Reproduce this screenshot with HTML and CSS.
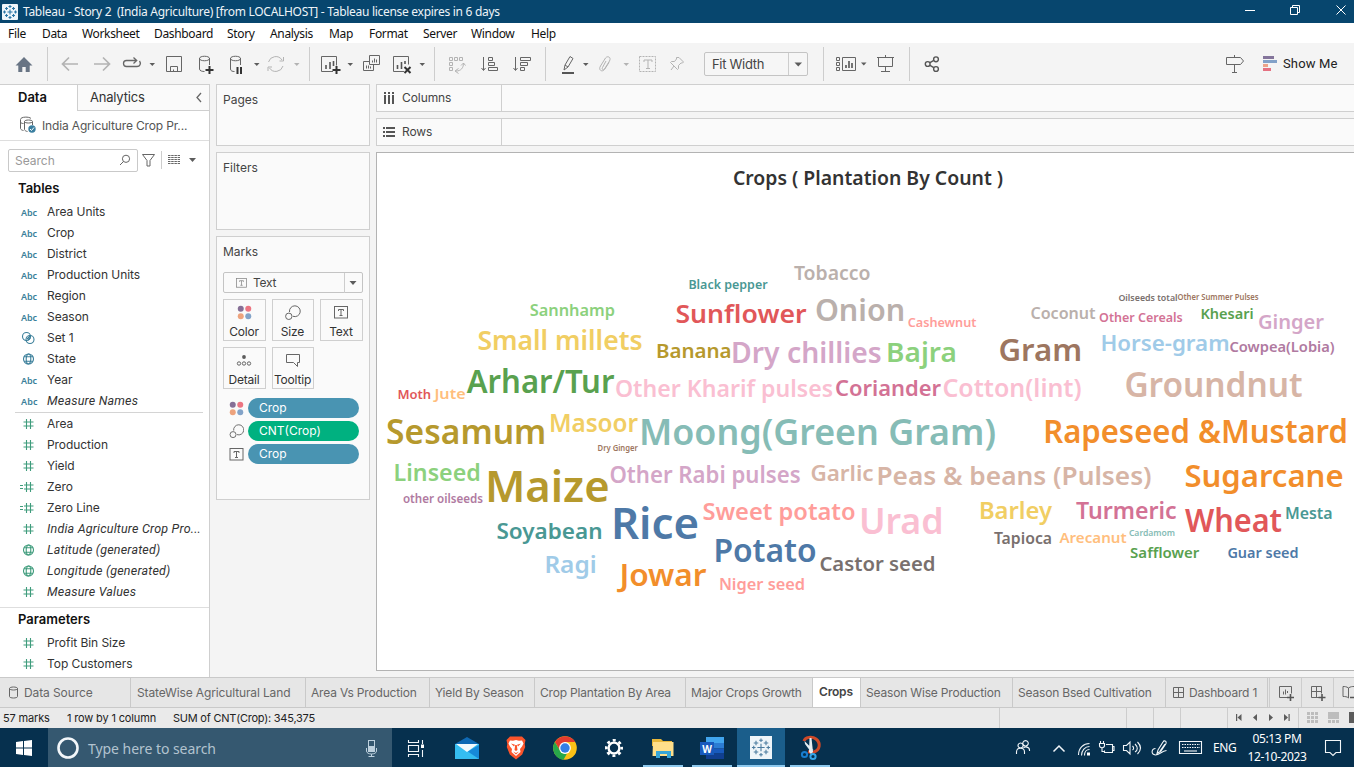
FILE: index.html
```html
<!DOCTYPE html>
<html lang="en">
<head>
<meta charset="utf-8">
<title>Tableau - Story 2 (India Agriculture)</title>
<link rel="stylesheet" href="styles.css">
</head>
<body>
<svg class="defs" width="0" height="0">
  <defs>
    <symbol id="hash" viewBox="0 0 16 14"><path d="M6.500 2v10M10.500 2v10M3.500 5h10M3.500 9h10"/></symbol>
    <symbol id="eqhash" viewBox="0 0 16 14"><path d="M6.500 2v10M10.500 2v10M4 5h9.500M4 9h9.500M0 5.500h3M0 8.500h3"/></symbol>
    <symbol id="globe" viewBox="0 0 16 14"><circle cx="8.500" cy="7" r="5"/><ellipse cx="8.500" cy="7" rx="2.300" ry="5"/><path d="M4.200 4.800h8.600M4.200 9.200h8.600"/></symbol>
    <symbol id="set" viewBox="0 0 16 14"><circle cx="6.500" cy="5.500" r="4"/><circle cx="10" cy="8.500" r="4"/><path d="M7 8l3-3M8 9l2.500-2.500"/></symbol>
    <symbol id="dots" viewBox="0 0 16 16"><circle cx="4" cy="4" r="3.200" fill="#866f96"/><circle cx="12" cy="4" r="3.200" fill="#ec7582"/><circle cx="4" cy="12" r="3.200" fill="#eda37d"/><circle cx="12" cy="12" r="3.200" fill="#83a3c8"/></symbol>
    <symbol id="size" viewBox="0 0 16 16"><path d="M5 7a5.400 5.400 0 1 1 3.500 4.300"/><circle cx="4.300" cy="11.300" r="3.200"/></symbol>
    <symbol id="tbox" viewBox="0 0 14 13"><rect x=".5" y=".5" width="13" height="11.500"/><path d="M4.500 5V3.500h5V5M7 3.500v6M5.500 9.500h3"/></symbol>
    <symbol id="tableau" viewBox="0 0 22 22"><path d="M11 7v8M7 11h8M11 1v4M9 3h4M11 17v4M9 19h4M1 11h4M3 9v4M17 11h4M19 9v4M5.500 3.500v5M3 6h5M16.500 3.500v5M14 6h5M5.500 13.500v5M3 16h5M16.500 13.500v5M14 16h5" stroke="#4b7c9f" stroke-width="1.200"/></symbol>
  </defs>
</svg>

<header class="titlebar">
  <svg class="applogo" width="16" height="16" viewBox="0 0 16 16"><rect width="16" height="16" rx="1" fill="#edf5fa"/><g fill="none" stroke="#2976a5" stroke-width="1.100"><path d="M8 5.500v5M5.500 8h5M8 1v3M6.500 2.500h3M8 12v3M6.500 13.500h3M1 8h3M2.500 6.500v3M12 8h3M13.500 6.500v3M4.500 3v3M3 4.500h3M11.500 3v3M10 4.500h3M4.500 10v3M3 11.500h3M11.500 10v3M10 11.500h3"/></g></svg>
  <span class="title-text">Tableau - Story 2&nbsp; (India Agriculture) [from LOCALHOST] - Tableau license expires in 6 days</span>
  <svg class="winctl" width="124" height="23" viewBox="1230 0 124 23"><path d="M1245 10.500h10M1290.500 7.500h7v7h-7zM1292.500 7.500v-2h7v7h-2M1336.500 5.500l9 9M1345.500 5.500l-9 9"/></svg>
</header>

<nav class="menubar">
  <span class="m1">File</span><span class="m2">Data</span><span class="m3">Worksheet</span><span class="m4">Dashboard</span><span class="m5">Story</span><span class="m6">Analysis</span><span class="m7">Map</span><span class="m8">Format</span><span class="m9">Server</span><span class="m10">Window</span><span class="m11">Help</span>
</nav>

<div class="toolbar">
  <svg width="48" height="41" viewBox="0 43 48 41"><path class="solid home" d="M15.500 65.500 24 57l8.500 8.500h-2.800v6.500h-4v-5h-3.400v5h-4v-6.500z"/><path class="sep" d="M47.500 47v34"/></svg>
  <svg width="112" height="41" viewBox="48 43 112 41"><path class="dim arrow" d="M78 64H63m6-6.500L62.500 64l6.500 6.500M94 64h15m-6-6.500 6.500 6.500-6.500 6.500"/><path class="line loop" d="M139.500 61c1.800 2.500.5 5.500-2.500 5.500h-10.500c-4 0-4-6 0-6h9.500M133.500 57.500l3.200 3-3.200 3"/><path class="solid" d="M149.500 63h5.500l-2.700 3z"/></svg>
  <svg width="152" height="41" viewBox="160 43 152 41"><path class="line" d="M166.500 56.500h15v15h-15zM170.500 71v-4.500h7v5M173.500 71.500v-2"/><path class="line" d="M199.500 58v11c0 2 3 2.500 5 2.500M209.500 65v-7M199.500 58.500c0-3 10-3 10 0s-10 3-10 0"/><path class="bold" d="M209.500 66v8M205.500 70h8"/><path class="line" d="M230.500 58v11c0 2 2 2.500 4 2.500M240.500 65v-7M230.500 58.500c0-3 10-3 10 0s-10 3-10 0"/><path class="bold" d="M237.500 67v7M241 67v7"/><path class="solid" d="M254 63h5.500l-2.700 3z"/><path class="dim" d="M268.500 62a7.500 7.500 0 0 1 13.500-2M283 66a7.500 7.500 0 0 1-13.500 2M279.500 61h4v-4M272 67h-4v4"/><path class="pale" d="M294 63h5.500l-2.700 3z"/><path class="sep" d="M309.500 47v34"/></svg>
  <svg width="124" height="41" viewBox="312 43 124 41"><path class="line" d="M333 71.500h-11.500v-15h15v9"/><path class="mid" d="M326 69v-4M330 69v-7M333.500 66v-5"/><path class="bold" d="M336.500 66v8M332.500 70h8"/><path class="solid" d="M347.500 63h5.500l-2.700 3z"/><path class="line" d="M369.500 55.500h10v9h-10zM369.500 61.500h-6v9h10v-6M372.500 62.500v-2M374.500 62.500v-4M376.500 62.500v-3M366.500 68.500v-3M368.500 68.500v-3M370.500 68.500v-2"/><path class="line" d="M404 71.500h-10.500v-15h15v8"/><path class="mid" d="M397.500 69v-4M401.500 69v-7M405 64v-3"/><path class="bold" d="M404.500 67l6 6M410.500 67l-6 6"/><path class="solid" d="M419.500 63h5.500l-2.700 3z"/><path class="sep" d="M434.500 47v34"/></svg>
  <svg width="112" height="41" viewBox="436 43 112 41"><path class="dim" d="M449.500 57.500h3v3h-3zM454.500 57.500h3v3h-3zM459.500 57.500h3v3h-3zM449.500 62.500h3v3h-3zM449.500 67.500h3v3h-3zM456 71c5 0 7.500-3 7.500-8M461 65.500l2.500-2.500 2 2.500M458.500 68.500 455 71l3.500 2.500"/><path class="line" d="M483.500 57v13M481.500 68l2 2.500 2-2.500M488.500 57.500h4v3h-4zM488.500 62.500h6v3h-6zM488.500 67.500h9v3h-9z"/><path class="line" d="M515.500 57v13M513.500 68l2 2.500 2-2.500M520.500 57.500h10v3h-10zM520.500 62.500h7v3h-7zM520.500 67.500h4v3h-4z"/><path class="sep" d="M545.500 47v34"/></svg>
  <svg width="156" height="41" viewBox="548 43 156 41"><path class="line" d="M564 70l1-5 5-8.500 3 2-5 8.500zM565 65l3 2"/><path class="bold under-pen" d="M562 73h12"/><path class="solid" d="M583 63h5.500l-2.700 3z"/><path class="dim" d="M606 61l-3.500 6.500c-1 2 1 3 2 1.500l5-8c2-4-2-5.500-4-3l-5 8c-2.500 4 1.500 6.500 4 3.500l4.500-7"/><path class="pale" d="M623.500 63h5.500l-2.700 3z"/><path class="dim dash" d="M639.500 56.500h16v15h-16z"/><path class="dim" d="M644 62v-2h8v2M648 60v8.500M646 68.500h4"/><path class="dim" d="M679 57.500l4.500 4.500-1 1h-1.500l-2.500 2.500v3l-1 1-7-7 1-1h3l2-2.500v-1.500zM674 66l-3 4"/></svg>
  <div class="fit"><span>Fit Width</span><svg width="19" height="22" viewBox="788 52 19 22"><path class="sep" d="M788.500 52v22"/><path class="solid" d="M794.500 61.500h7.500l-3.700 4z"/></svg></div>
  <svg width="132" height="41" viewBox="808 43 132 41"><path class="sep" d="M823.500 47v34"/><path class="line" d="M836.500 57.500h3v3h-3zM836.500 62.500h3v3h-3zM836.500 67.500h3v3h-3zM842.500 57.500h13v13h-13z"/><path class="mid" d="M846 68v-3M849 68v-7M852 68v-5"/><path class="solid" d="M861 62.500h5.500l-2.700 3z"/><path class="line" d="M877 57.500h17M878.500 57.500h14v9h-14zM885.500 55v2M885.500 66.500v5M881 71.500h9"/><path class="sep" d="M909.500 47v34"/><g class="share"><path d="M930 62.600l3.800-2.300M930 65.400l3.800 2.300"/><circle cx="927.700" cy="64" r="2.400"/><circle cx="936" cy="59.300" r="2.400"/><circle cx="936" cy="69" r="2.400"/></g></svg>
  <svg class="push" width="58" height="41" viewBox="1222 43 58 41"><path class="line" d="M1226.500 57.500h14l3 3.500-3 3.500h-14zM1234.500 55v2M1234.500 64.500v8M1232 72.500h5"/><path fill="#84759b" d="M1263 56h11v3h-11z"/><path fill="#82a1c8" d="M1263 60h14v3h-14z"/><path fill="#eba389" d="M1263 64h5v3h-5z"/><path fill="#e57181" d="M1263 68h8v3h-8z"/></svg>
  <span class="showme">Show Me</span>
</div>

<main class="work">
  <aside class="side">
    <div class="sidetabs"><b>Data</b><div class="analytics"><span>Analytics</span><svg width="8" height="16" viewBox="0 0 8 16"><path class="line back" d="M6 4 2 8.500l4 4.500"/></svg></div></div>
    <div class="source"><svg width="19" height="18" viewBox="0 0 19 18"><path class="line" d="M1.500 3.500c0-3 9-3 10.500-1M1.500 3.500v9c0 1 2 2 3 2M1.500 6c.5 1 1 1.500 3 1.500M5.500 5.500c0-2 8-2 8 0s-8 2-8 0v8c0 1 2 2 3 2M13.500 6v3"/><circle cx="13" cy="13" r="3.700" fill="#3b7fa0"/><path d="M11 13l1.500 1.500 2.500-3" stroke="#fff" fill="none"/></svg><span>India Agriculture Crop Pr...</span></div>
    <div class="searchrow">
      <div class="search"><span>Search</span><svg width="12" height="12" viewBox="0 0 12 12"><circle class="line" cx="7" cy="4.800" r="3.600"/><path class="line" d="M4.500 7.500 1 11"/></svg></div>
      <svg width="66" height="22" viewBox="138 149 66 22"><path class="line" d="M142.500 154.500h12l-4.500 6v5.500h-3v-5.500z"/><path class="sep" d="M161.500 151v18"/><path class="line menu-lines" d="M168 155.500h12M168 157.500h12M168 159.500h12M168 161.500h12M168 163.500h12"/><path class="solid" d="M189 158h7l-3.500 4z"/></svg>
    </div>
    <h2>Tables</h2>
    <ul class="fields blue">
      <li><i>Abc</i>Area Units</li><li><i>Abc</i>Crop</li><li><i>Abc</i>District</li><li><i>Abc</i>Production Units</li><li><i>Abc</i>Region</li><li><i>Abc</i>Season</li>
      <li><svg><use href="#set"/></svg>Set 1</li><li><svg><use href="#globe"/></svg>State</li><li><i>Abc</i>Year</li><li class="it"><i>Abc</i>Measure Names</li>
    </ul>
    <ul class="fields green">
      <li><svg><use href="#hash"/></svg>Area</li><li><svg><use href="#hash"/></svg>Production</li><li><svg><use href="#hash"/></svg>Yield</li><li><svg><use href="#eqhash"/></svg>Zero</li><li><svg><use href="#eqhash"/></svg>Zero Line</li>
      <li class="it"><svg><use href="#hash"/></svg>India Agriculture Crop Pro...</li><li class="it"><svg><use href="#globe"/></svg>Latitude (generated)</li><li class="it"><svg><use href="#globe"/></svg>Longitude (generated)</li><li class="it"><svg><use href="#hash"/></svg>Measure Values</li>
    </ul>
    <div class="params">
      <h2>Parameters</h2>
      <ul class="fields green"><li><svg><use href="#hash"/></svg>Profit Bin Size</li><li><svg><use href="#hash"/></svg>Top Customers</li></ul>
    </div>
  </aside>

  <section class="cards">
    <div class="card pages">Pages</div>
    <div class="card filters">Filters</div>
    <div class="card marks">Marks
      <div class="marktype"><svg class="gray" width="11" height="10"><use href="#tbox"/></svg><span>Text</span><svg width="18" height="20" viewBox="0 0 18 20"><path class="sep" d="M.5 0v20"/><path class="solid" d="M5.500 8h7l-3.500 4z"/></svg></div>
      <div class="buttons">
        <div><svg width="15" height="15"><use href="#dots"/></svg>Color</div>
        <div><svg class="line" width="17" height="16"><use href="#size"/></svg>Size</div>
        <div><svg class="line tb" width="14" height="13"><use href="#tbox"/></svg>Text</div>
        <div><svg class="line" width="16" height="14" viewBox="0 0 16 14"><circle cx="8" cy="4" r="1.900" class="solid"/><circle cx="3" cy="10.500" r="1.700"/><circle cx="8" cy="10.500" r="1.700"/><circle cx="13" cy="10.500" r="1.700"/></svg>Detail</div>
        <div><svg class="line" width="16" height="14" viewBox="0 0 16 14"><path d="M1.500 1.500h13v8h-2v4l-4-4h-7z"/></svg>Tooltip</div>
      </div>
      <div class="pillrow"><svg width="15" height="15"><use href="#dots"/></svg><span class="pill">Crop</span></div>
      <div class="pillrow"><svg class="line" width="15" height="15"><use href="#size"/></svg><span class="pill measure">CNT(Crop)</span></div>
      <div class="pillrow"><svg class="line" width="15" height="13"><use href="#tbox"/></svg><span class="pill">Crop</span></div>
    </div>
  </section>

  <section class="view">
    <div class="shelf"><div><svg width="12" height="12" viewBox="0 0 12 12"><path class="thick" d="M2 0v2M6 0v2M10 0v2M2 3v9M6 3v9M10 3v9"/></svg>Columns</div></div>
    <div class="shelf"><div><svg width="12" height="12" viewBox="0 0 12 12"><path class="thick" d="M0 2h2M0 6h2M0 10h2M3 2h9M3 6h9M3 10h9"/></svg>Rows</div></div>
    <div class="canvas">
      <svg class="cloud" id="cloud" width="977" height="517" viewBox="377 153 977 517"></svg>
    </div>
  </section>
</main>

<div class="sheettabs">
  <span class="t0"><svg width="9" height="13" viewBox="0 0 9 13"><path class="line" d="M.5 2.500v8c0 2 8 2 8 0v-8c0-2-8-2-8 0s8 2 8 0"/></svg>Data Source</span>
  <span class="t1">StateWise Agricultural Land</span><span class="t2">Area Vs Production</span><span class="t3">Yield By Season</span><span class="t4">Crop Plantation By Area</span><span class="t5">Major Crops Growth</span><span class="t6 active">Crops</span><span class="t7">Season Wise Production</span><span class="t8">Season Bsed Cultivation</span>
  <span class="t9"><svg width="11" height="11" viewBox="0 0 11 11"><path class="line" d="M.5 .5h10v10H.5zM5.500 .5v10M.5 5.500h10"/></svg>Dashboard 1</span>
  <svg width="86" height="29" viewBox="1268 678 86 29"><path class="sep" d="M1269.500 678v29M1301.500 678v29M1333.500 678v29"/><path class="line" d="M1287 697.500h-7.500v-11h12v7M1283.500 694.500v-3M1285.500 694.500v-5M1287.500 693v-2M1319 697.500h-7.500v-11h10v7M1316.500 686.500v11M1311.500 691.500h10M1348.500 688c-2-1.500-4-1.500-5.500-1.500v10c2 0 4 0 5.500 1.500zc2-1.500 4-1.500 5.500-1.500"/><path class="mid" d="M1290.500 694v7M1287 697.500h7M1322 694v7M1318.500 697.500h7M1350 697.500h4"/></svg>
</div>

<div class="status">
  <span class="s1">57 marks</span><span class="s2">1 row by 1 column</span><span class="s3">SUM of CNT(Crop): 345,375</span>
  <svg class="push" width="356" height="20" viewBox="998 708 356 20"><path class="sep" d="M999.500 708v20M1126.500 708v20M1153.500 708v20M1180.500 708v20M1227.500 708v20M1298.500 708v20"/><path class="solid" d="M1236 714h1.200v7H1236zM1241.500 714v7l-4-3.500zM1257 714v7l-4-3.500zM1269 714v7l4-3.500zM1284 714v7l4-3.500zM1288.500 714h1.200v7h-1.200z"/><path fill="#bdbdbd" d="M1307 712h3v3h-3zM1311 712h3v3h-3zM1315 712h3v3h-3zM1307 716h3v3h-3zM1311 716h3v3h-3zM1315 716h3v3h-3zM1307 720h3v3h-3zM1311 720h3v3h-3zM1315 720h3v3h-3zM1328 712h11v7h-11zM1328 720h3v3h-3zM1332 720h3v3h-3zM1336 720h3v3h-3z"/><path class="solid" d="M1349 712h5v11h-5z"/></svg>
</div>

<footer class="taskbar">
  <svg width="48" height="39" viewBox="0 728 48 39"><path fill="#fff" d="M16 742l7-1v6.500h-7zM24 741l8-1v7.500h-8zM16 748.500h7v6.500l-7-1zM24 748.500h8v7.500l-8-1z"/></svg>
  <div class="tasksearch"><svg width="40" height="39" viewBox="48 728 40 39"><circle cx="68" cy="748" r="9.500" fill="none" stroke="#f3f7fa" stroke-width="2.600"/></svg><span>Type here to search</span><svg class="push" width="40" height="39" viewBox="352 728 40 39"><rect x="368.500" y="740.500" width="6" height="11" fill="none" stroke="#bdd0dd"/><path fill="#bdd0dd" d="M369 746h5v5h-5z"/><path d="M366.500 748v3c0 4 10 4 10 0v-3M371.500 754v2.500M368.500 756.500h6" fill="none" stroke="#bdd0dd"/></svg></div>
  <svg width="50" height="39" viewBox="392 728 50 39"><path class="wline" d="M408.500 740v2.500h10V740M408.500 745.500h10v6h-10zM408.500 757v-2.500h10v2.500M422.500 740v4M422.500 750v7"/><path fill="#fff" d="M421 744.500h3v3.500h-3z"/></svg>
  <svg width="49" height="39" viewBox="442 728 49 39"><path fill="#0f69b4" d="M455 744l12-7 12 7v6h-24z"/><path fill="#35bdf1" d="M455 744h24v15h-24z"/><path fill="#1789d8" d="M455 759l12-7 12-7v14z"/><path fill="#35bdf1" d="M455 745v14h24l-12-8z"/><path fill="#f4fafc" d="M456 744h22l-11 8z"/></svg>
  <svg width="49" height="39" viewBox="491 728 49 39"><path fill="#fb542b" d="M510 736.500h12l3.500 3.500-.8 4 .5 3-3 7.500-6.200 5-6.200-5-3-7.500.5-3-.8-4z"/><path fill="#fff" d="M510 740.500l3 .3 3-.8 3 .8 3-.3 1.500 3-1.500 3-2 2.500.5 3-4.500 4-4.500-4 .5-3-2-2.500-1.500-3z"/><path fill="#fb542b" d="M511 743.500l4 1.200-1 1.800zM521 743.500l-4 1.200 1 1.800zM515.200 745h1.600l.7 5-1.500 1-1.500-1zM513 751.500l3 1.500 3-1.500-3 3z"/></svg>
  <svg width="49" height="39" viewBox="540 728 49 39"><circle cx="565" cy="748" r="11.800" fill="#fbc116"/><path fill="#e33b2e" d="M555 742a11.800 11.800 0 0 1 20.300 0H565l-5 8.500z"/><path fill="#28a84a" d="M554.800 742l5.200 8.500a5.700 5.700 0 0 0 7 3l-3.500 6.300A11.800 11.800 0 0 1 554.800 742z"/><circle cx="565" cy="748" r="5.900" fill="#fff"/><circle cx="565" cy="748" r="4.700" fill="#347fe4"/></svg>
  <svg width="49" height="39" viewBox="589 728 49 39"><circle cx="614" cy="748" r="7.700" fill="none" stroke="#fff" stroke-width="2.600" stroke-dasharray="3 3.047" stroke-dashoffset="1.500"/><circle cx="614" cy="748" r="5.400" fill="none" stroke="#fff" stroke-width="2.400"/></svg>
  <svg width="49" height="39" viewBox="638 728 49 39"><path fill="#e9b83b" d="M652 739h9l2 2h9v5h-20z"/><path fill="#ffdf8a" d="M653 742h20.500v14H652.500z"/><path fill="#38a6d8" d="M656 758v-7h15v7h-4v-4h-7v4z"/><path class="under" d="M643 766h40"/></svg>
  <svg width="49" height="39" viewBox="687 728 49 39"><path fill="#41a5ee" d="M706 737h18v6h-18z"/><path fill="#2b7cd3" d="M706 743h18v5.500h-18z"/><path fill="#185abd" d="M706 748.500h18v5h-18z"/><path fill="#103f91" d="M706 753.500h18v5.500h-18z"/><path fill="#185abd" d="M700 742h14v13h-14z"/><text x="707" y="752.500" text-anchor="middle" class="wordw">W</text><path class="under" d="M692 766h40"/></svg>
  <svg width="49" height="39" viewBox="736 728 49 39"><path fill="#1b5e8b" d="M737 728h48v39h-48z"/><path fill="#eef5f9" d="M750 736h22v23h-22z"/><use href="#tableau" x="751" y="737.500" width="20" height="20"/><path class="under" d="M737 766h48"/></svg>
  <svg width="55" height="39" viewBox="785 728 55 39"><path d="M804 741c1-4 8-5 12-2 5 4 4 11-2 13-2 .5-4 .3-6-.5" fill="none" stroke="#cf4928" stroke-width="3"/><path fill="#e6edf2" d="M809.500 738h2l1.500 14-2 2-2-2zM804.500 741l9 9-2.500 2-6-8z"/><circle cx="804.500" cy="754.500" r="2.600" fill="none" stroke="#187ed0" stroke-width="2"/><circle cx="813" cy="756.500" r="2.600" fill="none" stroke="#35a5e8" stroke-width="2"/><path class="under" d="M790 766h40"/></svg>
  <svg class="push" width="200" height="39" viewBox="1006 728 200 39"><path class="wline" d="M1016.500 754v-2c0-5 8-5 8 0v2M1020.500 748a2.500 2.500 0 1 1 .1 0M1023.500 748c1-1.500 6-1.500 6 2v1M1025.500 746a2.700 2.700 0 1 1 .1 0"/><path class="wline chevron" d="M1053.500 751.500l5.500-5.500 5.500 5.500"/><path class="wline" d="M1078.500 755c0-7 5-11.500 11-11.500M1081.500 755.500c0-5 3.500-9 8-9M1084.500 755.500c0-3.500 2-6 5-6"/><path fill="#fff" d="M1087 752.500h3v3h-3z"/><path class="wline" d="M1106 744.500h6.500v8h-8v-2M1112.500 746.500h1.500v4h-1.500M1099.500 743.500h5v2c0 3-5 3-5 0zM1100.500 741v2M1103.500 741v2M1102 748v3.500h2.500"/><path class="wline" d="M1123.500 745.500h3l3.500-3.500v12l-3.500-3.500h-3zM1132.500 746c1.500 1.500 1.500 3 0 4M1135 744c3 3 3 6 0 8M1137.500 742c4 4 4 8 0 12"/><path class="wline" d="M1158 750l5-8c1-2 4-1 3 1.500l-5 7.500-4 2.500zM1155.500 748.500c-4 0-5 6 0 6.500 4 0 6-4 11-4.500M1160 751l5-7"/><path class="wline" d="M1179.500 741.500h22v12h-22z"/><path class="wline keys" d="M1182 744.500h18M1182 747.500h18"/><path class="wline" d="M1184 751h13"/></svg>
  <span class="lang">ENG</span>
  <div class="clock"><span>05:13 PM</span><span>12-10-2023</span></div>
  <svg width="44" height="39" viewBox="1310 728 44 39"><path class="wline" d="M1325.500 740.500h15v12h-4.500l-3 3-3-3h-4.500z"/></svg>
</footer>
<script src="cloud.js"></script>
</body>
</html>
```

FILE: cloud.js
```js
// [label, colour, left, baseline, font size, width]
const words = [
  ["Crops ( Plantation By Count )", "#333", 732.5, 185, 20, 271],
  ["Tobacco", "#bab0ac", 793.5, 280, 20.5, 77.5],
  ["Black pepper", "#499894", 688, 289, 12.8, 80],
  ["Sannhamp", "#8cd17d", 529.3, 316, 16.7, 86],
  ["Sunflower", "#e15759", 675, 322.5, 26, 132],
  ["Onion", "#bab0ac", 814.5, 320.7, 31, 91],
  ["Cashewnut", "#ff9d9a", 907.3, 327, 12.7, 69.5],
  ["Small millets", "#f1ce63", 477, 350, 26.3, 166],
  ["Banana", "#b6992d", 655.5, 358, 20.3, 76.5],
  ["Dry chillies", "#d4a6c8", 730.7, 362.7, 28.3, 151.5],
  ["Bajra", "#8cd17d", 885.7, 362, 27, 71.5],
  ["Arhar/Tur", "#59a14f", 466.3, 393, 32, 148.5],
  ["Moth", "#e15759", 397, 399, 12.7, 34.5],
  ["Jute", "#ffbe7d", 434, 398.7, 14, 32],
  ["Other Kharif pulses", "#fabfd2", 614.5, 396.5, 23.3, 219],
  ["Coriander", "#d37295", 834.5, 396, 21.7, 107],
  ["Cotton(lint)", "#fabfd2", 942, 397, 24.5, 140],
  ["Sesamum", "#b6992d", 385.7, 443.7, 33.5, 161],
  ["Masoor", "#f1ce63", 548.5, 432, 24.7, 90],
  ["Dry Ginger", "#9d7660", 597.2, 451, 8.7, 41],
  ["Moong(Green Gram)", "#86bcb6", 638.5, 445, 36, 358],
  ["Linseed", "#8cd17d", 393.2, 480.7, 23.3, 88],
  ["other oilseeds", "#b07aa1", 402.5, 503, 12.3, 81],
  ["Maize", "#b6992d", 484.5, 502, 43.5, 125.5],
  ["Other Rabi pulses", "#d4a6c8", 609, 482.7, 23.3, 192],
  ["Garlic", "#d7b5a6", 810, 480.7, 22, 64],
  ["Peas & beans (Pulses)", "#d7b5a6", 876, 484.5, 26, 276],
  ["Rice", "#4e79a7", 610.5, 539, 43.5, 89],
  ["Soyabean", "#499894", 496, 538.7, 21.8, 107],
  ["Sweet potato", "#ff9d9a", 702, 519.5, 23.3, 154],
  ["Potato", "#4e79a7", 713, 562, 31.5, 104],
  ["Urad", "#fabfd2", 858.5, 534, 36, 85.5],
  ["Ragi", "#a0cbe8", 544, 572.7, 23.7, 53],
  ["Jowar", "#f28e2b", 619, 586, 30, 88],
  ["Castor seed", "#79706e", 819, 570.7, 20.5, 117],
  ["Niger seed", "#ff9d9a", 718.5, 590, 16.8, 87],
  ["Coconut", "#bab0ac", 1030, 319, 16.7, 66],
  ["Other Cereals", "#d37295", 1098.7, 322, 13, 84.5],
  ["Khesari", "#59a14f", 1200, 319, 15, 54],
  ["Ginger", "#d4a6c8", 1257.5, 329, 20.3, 67],
  ["Oilseeds total", "#79706e", 1118, 301, 9.5, 60],
  ["Other Summer Pulses", "#9d7660", 1177, 300, 8.5, 82],
  ["Gram", "#9d7660", 998, 361, 31.3, 84.5],
  ["Horse-gram", "#a0cbe8", 1100, 351, 22.3, 130],
  ["Cowpea(Lobia)", "#b07aa1", 1229, 352, 14.5, 106],
  ["Groundnut", "#d7b5a6", 1124, 397, 34, 179],
  ["Rapeseed &Mustard", "#f28e2b", 1042.8, 443, 32, 305.5],
  ["Sugarcane", "#f28e2b", 1184, 487, 31, 160],
  ["Barley", "#f1ce63", 978.5, 519, 23.7, 74],
  ["Turmeric", "#d37295", 1075.5, 519, 23.5, 101.5],
  ["Wheat", "#e15759", 1184.5, 532, 32, 98],
  ["Mesta", "#499894", 1284.5, 519, 15.9, 48.5],
  ["Tapioca", "#79706e", 993.5, 544.3, 15.7, 59],
  ["Arecanut", "#ffbe7d", 1059, 543, 14.9, 68],
  ["Cardamom", "#86bcb6", 1128.5, 536, 9.3, 47],
  ["Safflower", "#59a14f", 1129.7, 558, 14.7, 70],
  ["Guar seed", "#4e79a7", 1227, 558, 14.7, 72]
];

const cloud = document.getElementById("cloud");
for (const [label, fill, x, y, size, width] of words) {
  const t = document.createElementNS("http://www.w3.org/2000/svg", "text");
  t.textContent = label;
  const attrs = { fill, x: x + 0.4, y, "font-size": size, textLength: width - 0.8, lengthAdjust: "spacingAndGlyphs" };
  for (const k in attrs) t.setAttribute(k, attrs[k]);
  cloud.appendChild(t);
}
```

FILE: styles.css
```css
* { box-sizing: border-box; }
body { margin: 0; width: 1354px; height: 767px; overflow: hidden; display: flex; flex-direction: column; font-family: Inter, "Noto Sans", sans-serif; font-size: 12px; color: #444; background: #f4f4f4; }
svg { display: block; flex: none; }
.defs { position: absolute; }
.push { margin-left: auto; }

.line, .mid, .dim, .bold, .sep, .thick, .wline, .share { fill: none; stroke: #666; stroke-width: 1; }
.mid { stroke-width: 1.6; stroke: #555; }
.dim { stroke: #b3b3b3; }
.arrow { stroke-width: 1.7; }
.loop { stroke-width: 1.3; }
.back { stroke-width: 1.3; }
.share { stroke: #555; stroke-width: 1.4; }
.dash { stroke-dasharray: 2 1; }
.bold { stroke: #333; stroke-width: 2; }
.under-pen { stroke: #555; }
.sep { stroke: #cdcdcd; }
.thick { stroke: #555; stroke-width: 2; }
.solid { fill: #5c5c5c; stroke: none; }
.home { fill: #687484; }
.pale { fill: #b3b3b3; }
.wline { stroke: #f2f6f9; stroke-width: 1.1; }
.chevron { stroke-width: 1.5; }
.keys { stroke-dasharray: 1.5 1; }
.menu-lines { stroke-dasharray: 2.5 .7; }

.titlebar { height: 23px; flex: none; background: #07466e; display: flex; align-items: center; color: #eef4f8; }
.applogo { margin-left: 2px; }
.title-text { margin-left: 5px; font: 12px "Noto Sans", sans-serif; letter-spacing: -0.29px; white-space: nowrap; }
.winctl { margin-left: auto; fill: none; stroke: #fff; }

.menubar { height: 20px; flex: none; background: #fff; display: flex; align-items: center; font: 12px "Noto Sans", sans-serif; color: #111; padding-left: 8px; letter-spacing: -0.34px; }
.m1 { width: 34px; } .m2 { width: 40px; } .m3 { width: 72px; } .m4 { width: 73px; } .m5 { width: 43px; } .m6 { width: 59px; } .m7 { width: 40px; } .m8 { width: 54px; } .m9 { width: 48px; } .m10 { width: 60px; }

.toolbar { height: 41px; flex: none; display: flex; align-items: center; background: #f4f4f4; }
.fit { width: 104px; height: 24px; flex: none; border: 1px solid #c4c4c4; border-radius: 2px; display: flex; align-items: center; justify-content: space-between; padding-left: 7px; font-size: 13px; letter-spacing: -.3px; background: #f6f6f6; }
.showme { width: 74px; padding-left: 3px; font: 13px Roboto, sans-serif; letter-spacing: .15px; color: #222; white-space: nowrap; }

.work { height: 593px; flex: none; display: flex; }
.side { width: 210px; height: 593px; flex: none; background: #fff; border-right: 1px solid #cfcfcf; border-top: 1px solid #cfcfcf; overflow: hidden; }
.sidetabs { height: 26px; display: flex; }
.sidetabs b { width: 77px; padding: 4px 0 0 18px; font-size: 13px; font-weight: 600; color: #111; }
.analytics { flex: 1; display: flex; justify-content: space-between; border-left: 1px solid #cfcfcf; border-bottom: 1px solid #cfcfcf; background: #fafafa; padding: 4px 6px 0 12px; font-size: 13px; letter-spacing: -.2px; color: #333; }
.source { height: 30px; border-bottom: 1px solid #dedede; display: flex; align-items: center; padding: 0 0 1px 19px; gap: 4px; color: #555; letter-spacing: -.15px; white-space: nowrap; }
.searchrow { height: 38px; display: flex; align-items: center; padding-left: 8px; }
.search { width: 130px; height: 23px; border: 1px solid #c9c9c9; border-radius: 2px; display: flex; align-items: center; justify-content: space-between; padding: 0 6px; color: #999; }
h2 { margin: 0; padding-left: 18px; height: 22px; line-height: 19px; font-size: 13px; font-weight: 600; color: #111; }
.fields { list-style: none; margin: 0; padding: 0; }
.fields li { height: 21px; display: flex; align-items: center; white-space: nowrap; color: #333; letter-spacing: -.06px; }
.fields i { width: 26px; margin-left: 21px; padding-top: 1px; font: 600 9px "Noto Sans", sans-serif; }
.fields svg { width: 16px; height: 14px; margin: 0 11px 0 20px; fill: none; stroke-width: 1.1; }
.blue i { color: #3b7f9a; }
.blue svg { stroke: #3b7f9a; }
.green svg { stroke: #3f9c7c; }
.fields .it { font: italic 12.5px Roboto, sans-serif; letter-spacing: .2px; }
.blue + .green { padding-top: 2px; background: linear-gradient(#d4d4d4, #d4d4d4) 15px 1px / 188px 1px no-repeat; }
.params { margin-top: 5px; border-top: 1px solid #dedede; padding-top: 2px; }

.cards { width: 154px; margin-left: 6px; display: flex; flex-direction: column; gap: 6px; }
.card { border: 1px solid #cfcfcf; background: #fafafa; padding: 8px 6px 0; color: #444; flex: none; line-height: 14px; }
.pages { height: 62px; }
.filters { height: 78px; }
.marks { height: 264px; }
.marktype { height: 21px; margin-top: 13px; border: 1px solid #c4c4c4; border-radius: 2px; display: flex; align-items: center; padding-left: 12px; width: 140px; }
.marktype span { flex: 1; padding-left: 6px; letter-spacing: -.25px; }
.gray { fill: none; stroke: #888; }
.buttons { display: grid; grid-template-columns: 43px 42px 43px; gap: 6px; margin: 6px 0 9px; letter-spacing: -.2px; }
.buttons div { height: 42px; border: 1px solid #cfcfcf; display: flex; flex-direction: column; align-items: center; justify-content: space-between; padding: 5px 1px 1px 0; color: #333; }
.buttons .tb { margin-top: 1px; }
.pillrow { height: 20px; margin-bottom: 3px; display: flex; align-items: center; padding-left: 6px; gap: 4px; }
.pill { width: 111px; height: 20px; border-radius: 10px; background: #4994b2; color: #fff; padding-left: 11px; line-height: 20px; }
.measure { background: #00b180; }

.view { width: 978px; margin-left: 6px; flex: none; }
.shelf { height: 28px; border: solid #cfcfcf; border-width: 1px 0 1px 1px; margin-bottom: 6px; background: #fafafa; }
.shelf div { width: 125px; height: 26px; border-right: 1px solid #cfcfcf; display: flex; align-items: center; gap: 7px; padding: 0 0 1px 6px; letter-spacing: -.08px; }
.canvas { height: 519px; border: solid #b3b3b3; border-width: 1px 0 1px 1px; background: #fff; }
.cloud { overflow: visible; }
.cloud text { font-family: "Noto Sans", sans-serif; font-weight: 600; }

.sheettabs { height: 31px; flex: none; display: flex; background: #e6e6e6; border-top: 1px solid #c9c9c9; border-bottom: 1px solid #c9c9c9; color: #666; letter-spacing: -.18px; }
.sheettabs span { border-right: 1px solid #c9c9c9; display: flex; align-items: center; gap: 6px; white-space: nowrap; padding-left: 6px; flex: none; }
.sheettabs .t0 { width: 131px; padding-left: 9px; letter-spacing: -.1px; }
.t1 { width: 175px; } .t2 { width: 124px; } .t3 { width: 105px; } .t4 { width: 151px; } .t5 { width: 127px; } .t6 { width: 48px; } .t7 { width: 152px; } .t8 { width: 153px; } .t9 { width: 102px; }
.sheettabs .t1 { letter-spacing: -.13px; }
.sheettabs .t2, .sheettabs .t3, .sheettabs .t4, .sheettabs .t5, .sheettabs .t7, .sheettabs .t8 { padding-left: 5px; }
.sheettabs .t9 { padding-left: 7px; gap: 5px; }
.sheettabs .active { background: #fff; font-weight: 600; color: #444; padding-bottom: 3px; }
.status { height: 20px; flex: none; display: flex; align-items: center; background: #eaeaea; font-size: 11px; color: #222; padding-left: 3px; white-space: nowrap; letter-spacing: -.15px; }
.s1 { width: 64px; } .s2 { width: 106px; }
.status .s3 { letter-spacing: -.23px; }

.taskbar { height: 39px; flex: none; display: flex; align-items: center; background: #06304e; color: #fff; }
.tasksearch { width: 344px; height: 39px; flex: none; background: #355870; display: flex; align-items: center; font: 14px "Noto Sans", sans-serif; letter-spacing: -.05px; color: #b2c3cf; }
.tasksearch span { padding-top: 1px; }
.under { stroke: #8ec9ee; stroke-width: 2; }
.wordw { font: 700 10px "Noto Sans", sans-serif; fill: #fff; }
.lang { width: 38px; padding-left: 7px; font: 12px "Noto Sans", sans-serif; letter-spacing: -.4px; }
.clock { width: 66px; display: flex; flex-direction: column; align-items: center; font: 12px/18px "Noto Sans", sans-serif; letter-spacing: -0.35px; white-space: nowrap; }
```
